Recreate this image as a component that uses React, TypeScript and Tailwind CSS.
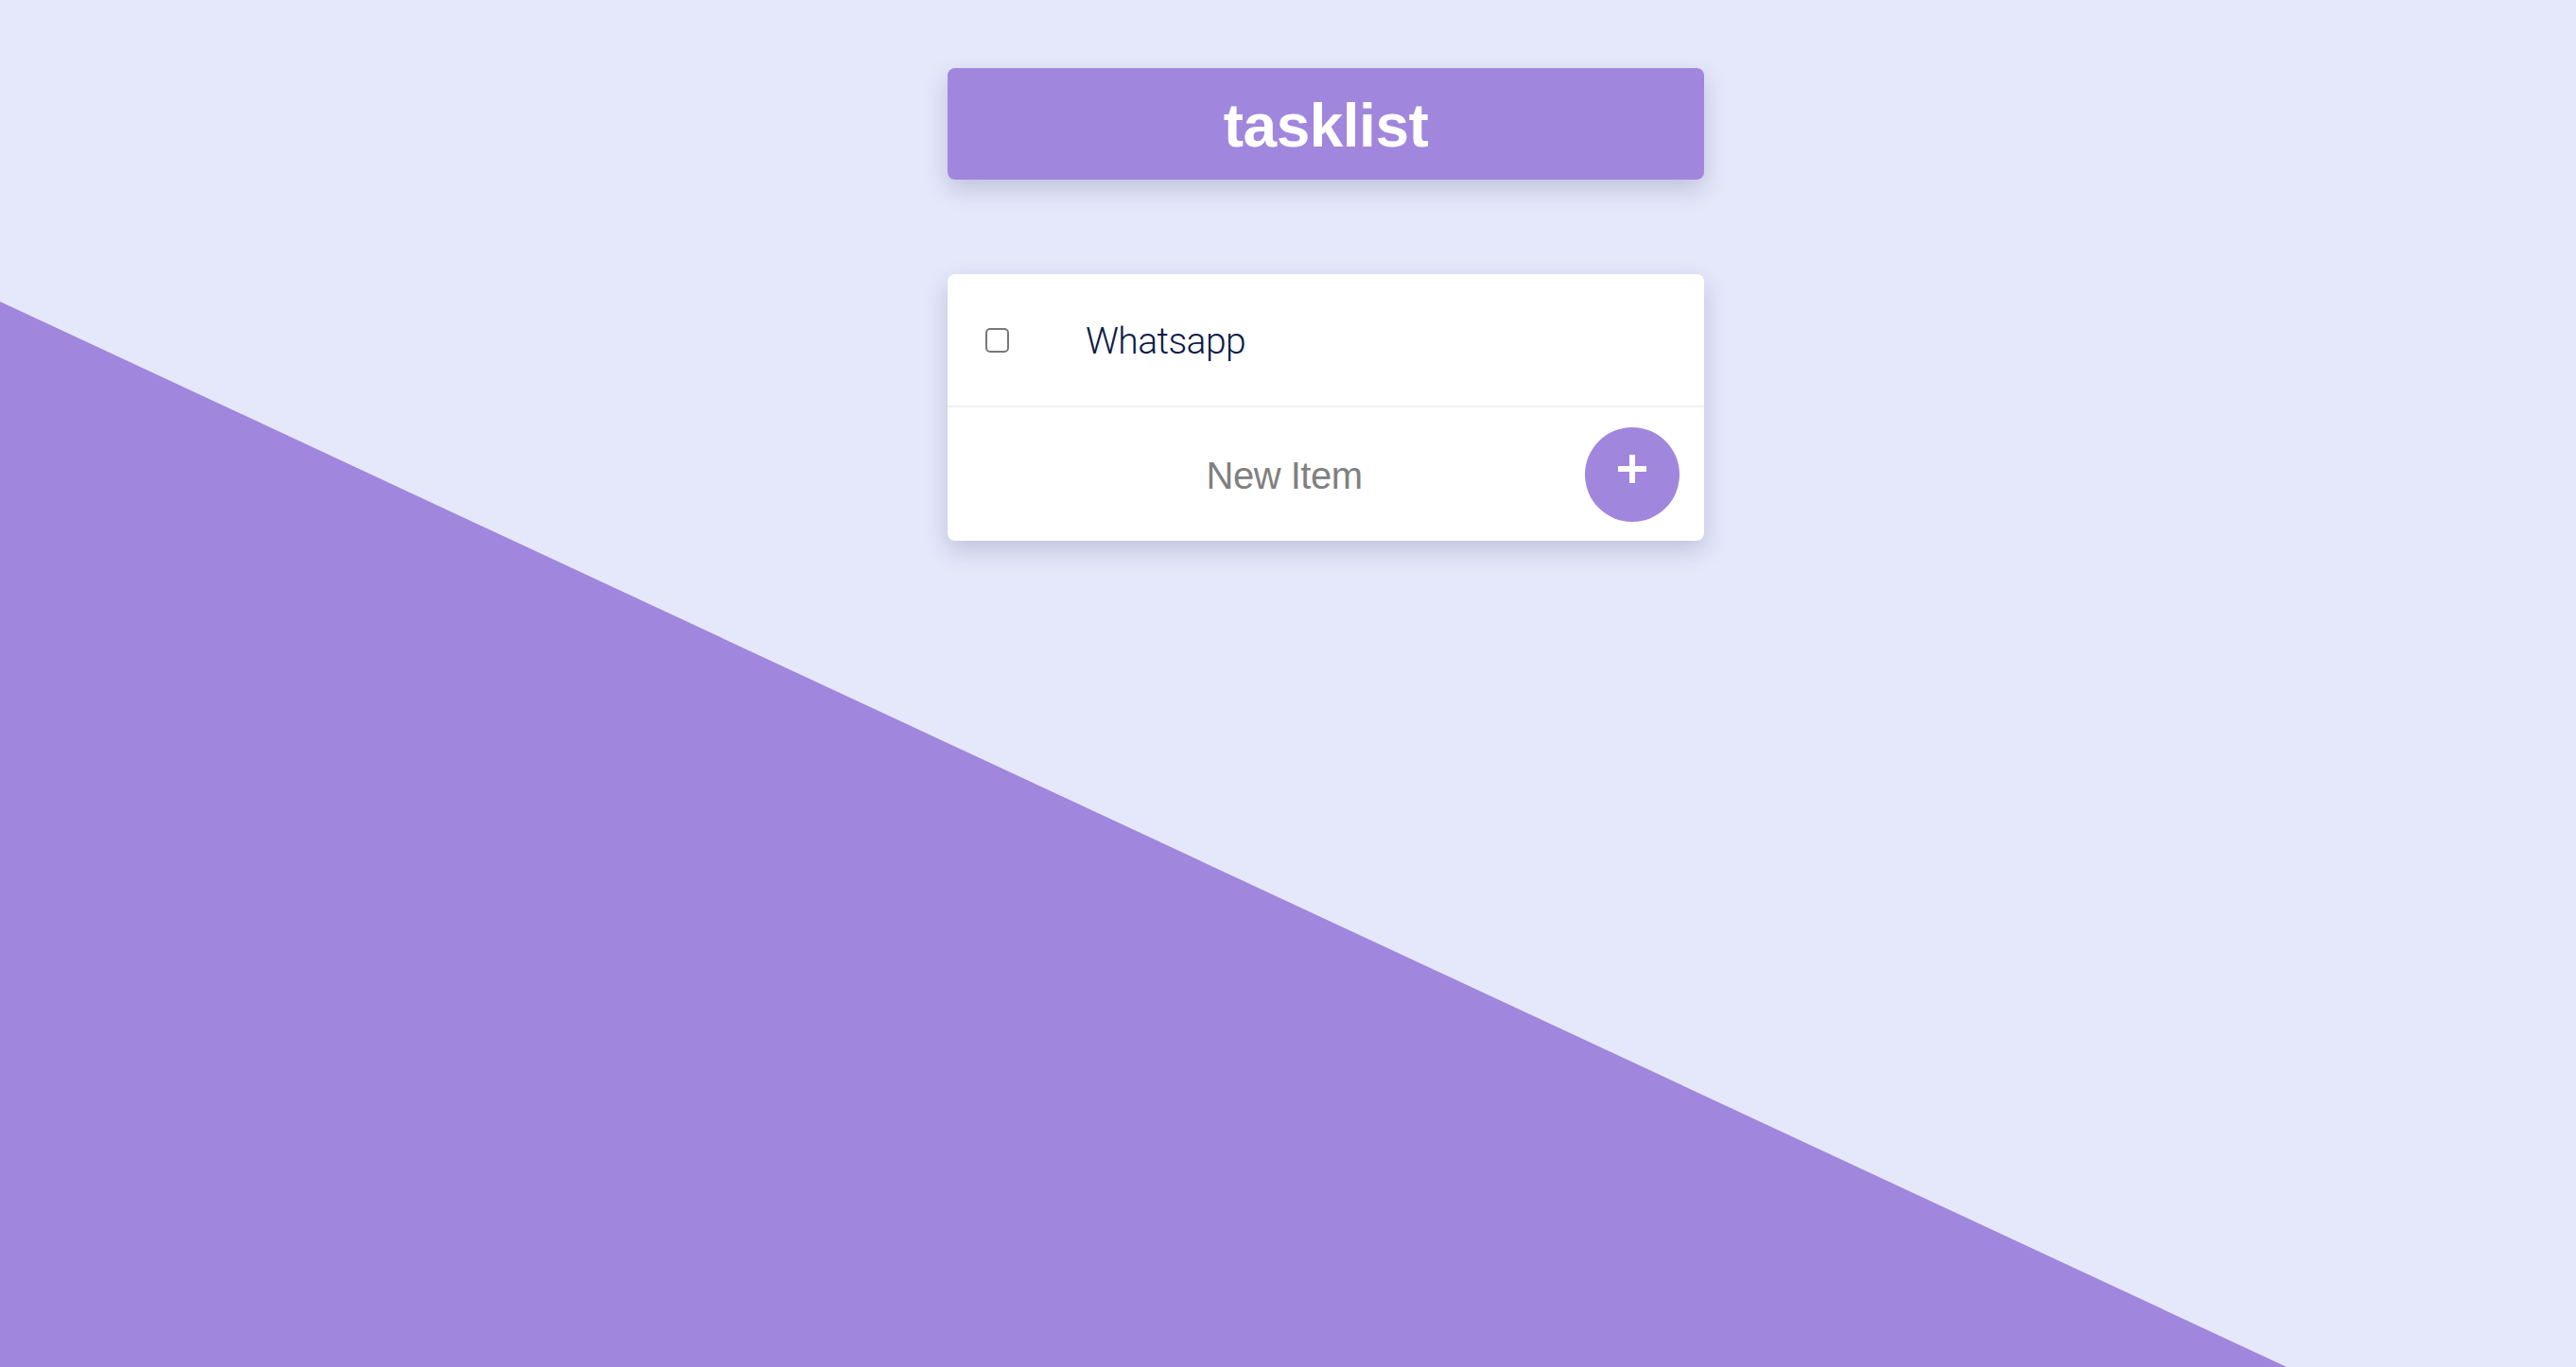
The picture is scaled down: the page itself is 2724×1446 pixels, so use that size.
import React, { useState } from 'react';

const App: React.FC = () => {
  const [items] = useState([{ id: 1, text: 'Whatsapp', done: false }]);

  return (
    <div className="relative w-full h-[1446px] overflow-hidden bg-[#e5e8fa] font-['Liberation_Sans',Arial,sans-serif]">
      {/* diagonal background */}
      <div className="absolute inset-0 bg-[#a186dd] [clip-path:polygon(0_22.06%,88.77%_100%,0_100%)]"></div>

      <div className="relative flex flex-col items-center pt-[72px] pl-[80px]">
        <div className="w-[800px] h-[118px] bg-[#a186dd] rounded-[8px] shadow-[0_10px_24px_rgba(60,60,120,0.22)] flex items-center justify-center">
          <h1 className="text-white font-bold text-[64px] leading-none tracking-[-0.5px] pt-[4px]">tasklist</h1>
        </div>

        <div className="mt-[100px] w-[800px] bg-white rounded-[8px] shadow-[0_10px_24px_rgba(60,60,120,0.22)] flex flex-col">
          {items.map((item) => (
            <div key={item.id} className="h-[141px] flex items-center border-b-2 border-[#f1f1f3]">
              <div className="ml-[40px] w-[25px] h-[26px] border-2 border-[#777] rounded-[5px]"></div>
              <span className="ml-[81px] text-[39px] font-light text-[#0b1c48] font-['Roboto',sans-serif] tracking-[-0.6px] pt-[4px]">
                {item.text}
              </span>
            </div>
          ))}
          <div className="h-[141px] flex items-center">
            <div className="flex-1 pl-[38px] text-center text-[40px] text-[#808080] tracking-[-0.5px] pt-[2px]">
              New Item
            </div>
            <button className="mr-[26px] w-[100px] h-[100px] rounded-full bg-[#a186dd] flex items-center justify-center">
              <svg width="30" height="30" viewBox="0 0 30 30" className="mb-[12px]">
                <rect x="12" y="0" width="6" height="30" fill="white" />
                <rect x="0" y="12" width="30" height="6" fill="white" />
              </svg>
            </button>
          </div>
        </div>
      </div>
    </div>
  );
};

export default App;
